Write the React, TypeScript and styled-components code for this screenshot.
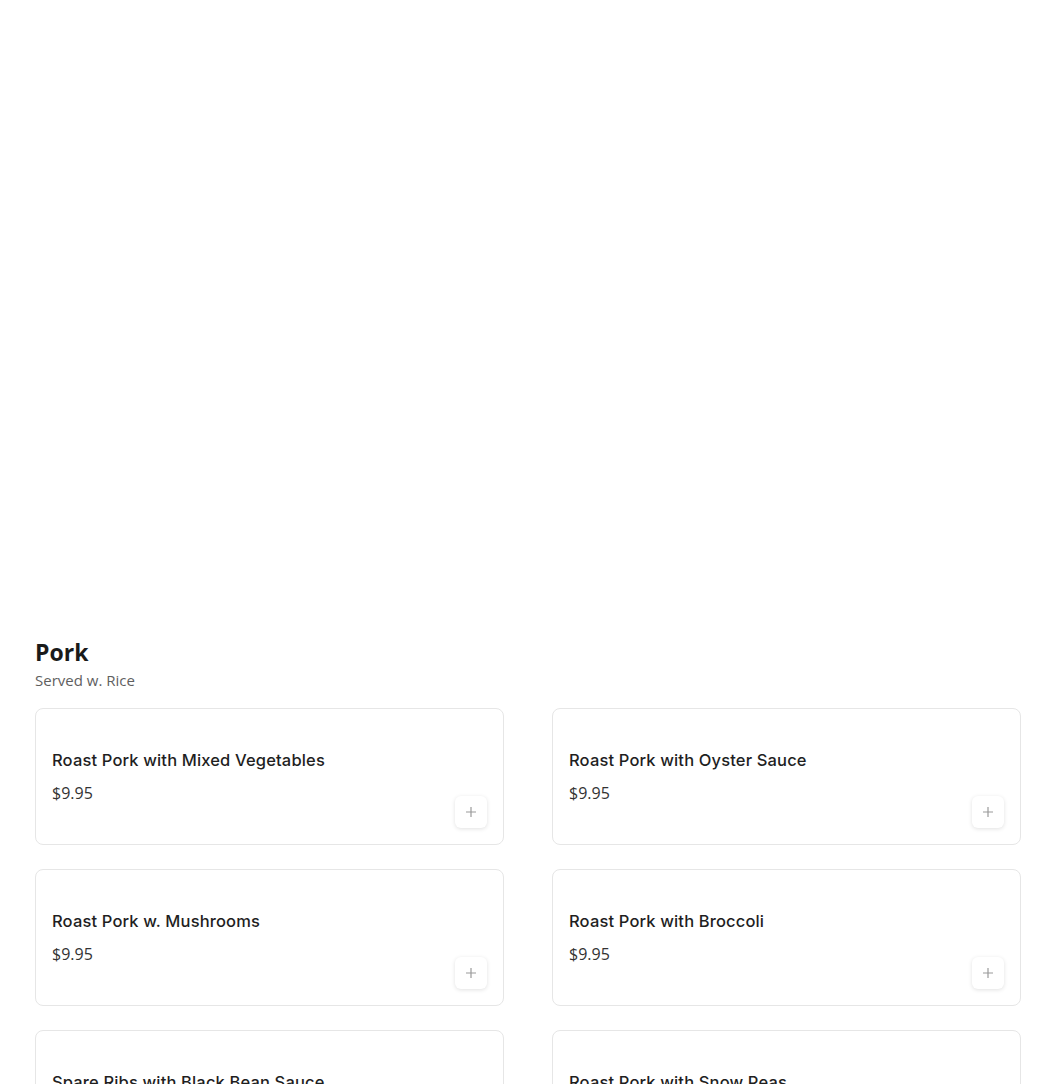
import React from 'react';
import styled, { createGlobalStyle } from 'styled-components';

const GlobalStyle = createGlobalStyle`
  * {
    box-sizing: border-box;
  }
  body {
    margin: 0;
    background: #ffffff;
    font-family: 'Open Sans', 'Noto Sans', sans-serif;
    color: #1a1a1a;
  }
`;

const Page = styled.div`
  padding: 0 29px 40px 35px;
`;

const Banner = styled.div`
  height: 636px;
`;

const SectionHeader = styled.div`
  margin-bottom: 18px;
`;

const SectionTitle = styled.h2`
  margin: 0;
  font-size: 23px;
  font-weight: 700;
  line-height: 32px;
  color: #1a1a1a;
`;

const SectionNote = styled.p`
  margin: 2px 0 0;
  font-size: 15px;
  line-height: 20px;
  color: #5f5f5f;
`;

const ItemGrid = styled.div`
  display: grid;
  grid-template-columns: repeat(2, 1fr);
  column-gap: 48px;
  row-gap: 24px;
`;

const ItemCard = styled.div`
  display: flex;
  align-items: center;
  gap: 12px;
  min-height: 137px;
  padding: 16px;
  border: 1px solid #e6e6e6;
  border-radius: 8px;
  background: #fff;
`;

const ItemInfo = styled.div`
  flex: 1;
  display: flex;
  flex-direction: column;
  gap: 9px;
`;

const ItemName = styled.div`
  font-family: Inter, 'Open Sans', sans-serif;
  font-size: 16.5px;
  font-weight: 500;
  letter-spacing: 0.15px;
  line-height: 24px;
  color: #1f1f1f;
`;

const ItemPrice = styled.div`
  font-size: 16px;
  line-height: 24px;
  color: #333;
`;

const AddButton = styled.button`
  align-self: flex-end;
  display: flex;
  align-items: center;
  justify-content: center;
  width: 32px;
  height: 32px;
  padding: 0;
  border: none;
  border-radius: 6px;
  background: #fff;
  box-shadow: 0 1px 4px rgba(0, 0, 0, 0.12);
  color: #9a9a9a;
  cursor: pointer;

  svg {
    width: 12px;
    height: 12px;
  }
`;

const items = [
  { id: '1', name: 'Roast Pork with Mixed Vegetables', price: '$9.95' },
  { id: '2', name: 'Roast Pork with Oyster Sauce', price: '$9.95' },
  { id: '3', name: 'Roast Pork w. Mushrooms', price: '$9.95' },
  { id: '4', name: 'Roast Pork with Broccoli', price: '$9.95' },
  { id: '5', name: 'Spare Ribs with Black Bean Sauce', price: '$9.95' },
  { id: '6', name: 'Roast Pork with Snow Peas', price: '$9.95' },
];

const PlusIcon = () => (
  <svg viewBox="0 0 12 12" fill="none" stroke="currentColor" strokeWidth="1.2">
    <path d="M6 1V11M1 6H11" />
  </svg>
);

const App: React.FC = () => {
  return (
    <Page>
      <GlobalStyle />
      <Banner />
      <SectionHeader>
        <SectionTitle>Pork</SectionTitle>
        <SectionNote>Served w. Rice</SectionNote>
      </SectionHeader>
      <ItemGrid>
        {items.map((item) => (
          <ItemCard key={item.id}>
            <ItemInfo>
              <ItemName>{item.name}</ItemName>
              <ItemPrice>{item.price}</ItemPrice>
            </ItemInfo>
            <AddButton aria-label="Add">
              <PlusIcon />
            </AddButton>
          </ItemCard>
        ))}
      </ItemGrid>
    </Page>
  );
};

export default App;
